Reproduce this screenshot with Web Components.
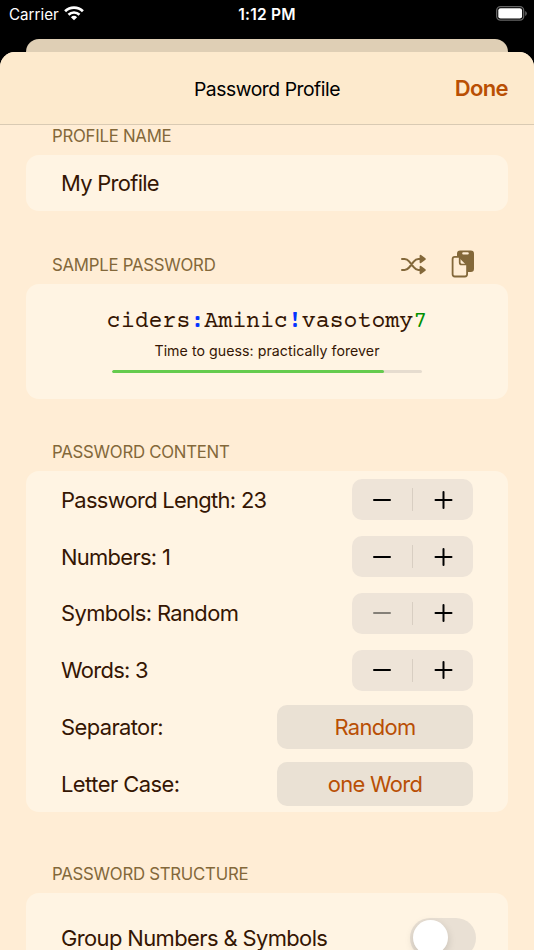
<!DOCTYPE html>
<html lang="en">
<head>
<meta charset="utf-8">
<title>Password Profile</title>
<style>
    body {
        margin: 0;
        height: 950px;
        overflow: hidden;
        background: #000;
        font-family: Inter, "Liberation Sans", sans-serif;
        --text: #351603;
        --accent: #b94f04;
        --muted: #83683a;
        --page: #ffedd5;
        --card: #fff4e3;
    }
</style>
</head>
<body>
<profile-sheet>
    <form-section label="Profile Name" style="height: 86.4px">
        <form-row style="height: 56.4px">My Profile</form-row>
    </form-section>
    <form-section label="Sample Password" style="height: 188px">
        <sample-actions slot="actions"></sample-actions>
        <password-sample strength="87.7">ciders:Aminic!vasotomy7</password-sample>
    </form-section>
    <form-section label="Password Content" style="height: 412.6px">
        <form-row>Password Length: 23<value-stepper slot="control"></value-stepper></form-row>
        <form-row>Numbers: 1<value-stepper slot="control"></value-stepper></form-row>
        <form-row style="letter-spacing: -0.62px">Symbols: Random<value-stepper slot="control" at-min></value-stepper></form-row>
        <form-row>Words: 3<value-stepper slot="control"></value-stepper></form-row>
        <form-row style="letter-spacing: -0.6px">Separator:<option-button slot="control">Random</option-button></form-row>
        <form-row style="letter-spacing: -0.53px">Letter Case:<option-button slot="control">one Word</option-button></form-row>
    </form-section>
    <form-section label="Password Structure" style="height: 170.4px">
        <form-row style="height: 89px; letter-spacing: -0.6px">Group Numbers &amp; Symbols<toggle-switch slot="control"></toggle-switch></form-row>
    </form-section>
</profile-sheet>

<script>
class StatusBar extends HTMLElement {
    constructor() {
        super();
        this.attachShadow({mode: "open"}).innerHTML = `
        <style>
        :host {
            display: grid;
            grid-template-columns: 1fr auto 1fr;
            align-items: center;
            height: 28px;
            padding: 0 9px;
            color: #fff;
            font-size: 15.2px;
        }
        .network {
            display: flex;
            align-items: center;
            gap: 5px;
        }
        .time {
            font-size: 15.5px;
            font-weight: 600;
            letter-spacing: 0.2px;
        }
        .battery {
            justify-self: end;
            margin-right: -2px;
        }
        svg {
            display: block;
            margin-top: -2px;
        }
        </style>
        <div class="network">
            <span>Carrier</span>
            <svg width="20" height="15" viewBox="0 0 20 15" fill="none" stroke="#fff" stroke-width="2.7">
                <path d="M1.1 5.2a12.8 12.8 0 0 1 17.8 0M4.5 8.7a8 8 0 0 1 11 0"/>
                <path d="M10 14.3 6.9 11.2a4.5 4.5 0 0 1 6.2 0z" fill="#fff" stroke="none"/>
            </svg>
        </div>
        <span class="time">1:12 PM</span>
        <svg class="battery" width="31" height="15" viewBox="0 0 31 15">
            <rect x=".7" y=".7" width="27" height="13.4" rx="3.8" fill="none" stroke="#666" stroke-width="1.3"/>
            <rect x="2.3" y="2.3" width="23.8" height="10.2" rx="2.2" fill="#fff"/>
            <path d="M29.3 5v5q1.4-.8 1.4-2.5T29.3 5z" fill="#777"/>
        </svg>`;
    }
}

class ProfileSheet extends HTMLElement {
    constructor() {
        super();
        this.attachShadow({mode: "open"}).innerHTML = `
        <style>
        :host {
            display: flex;
            flex-direction: column;
            height: 950px;
        }
        .behind {
            flex: none;
            height: 13px;
            margin: 11px 26px 0;
            border-radius: 13px 13px 0 0;
            background: #dfcfb5;
        }
        .sheet {
            flex: 1;
            min-height: 0;
            overflow: hidden;
            border-radius: 15px 15px 0 0;
            background: var(--page);
        }
        header {
            display: grid;
            grid-template-columns: 1fr auto 1fr;
            align-items: center;
            box-sizing: border-box;
            height: 73px;
            padding: 0 26px;
            border-bottom: 1px solid #d9cab3;
            background: #fdeacd;
        }
        h1 {
            grid-column: 2;
            margin: 0;
            padding-top: 2px;
            color: #000;
            font-size: 19.35px;
            font-weight: 400;
            letter-spacing: -0.48px;
        }
        .done {
            justify-self: end;
            color: var(--accent);
            font-size: 22px;
            font-weight: 600;
            letter-spacing: -0.6px;
        }
        </style>
        <status-bar></status-bar>
        <div class="behind"></div>
        <div class="sheet">
            <header><h1>Password Profile</h1><span class="done">Done</span></header>
            <slot></slot>
        </div>`;
    }
}

class FormSection extends HTMLElement {
    constructor() {
        super();
        this.attachShadow({mode: "open"}).innerHTML = `
        <style>
        :host {
            display: flex;
            flex-direction: column;
            padding: 0 26px;
        }
        .heading {
            flex: 1;
            display: flex;
            justify-content: space-between;
            align-items: flex-end;
            padding: 0 32px 0 26px;
        }
        h2 {
            margin: 0 0 9px;
            color: var(--muted);
            font-size: 16.77px;
            font-weight: 400;
            line-height: 20px;
            letter-spacing: -0.25px;
            text-transform: uppercase;
        }
        .card {
            flex: none;
            border-radius: 13px;
            background: var(--card);
        }
        </style>
        <div class="heading"><h2>${this.getAttribute("label")}</h2><slot name="actions"></slot></div>
        <div class="card"><slot></slot></div>`;
    }
}

class FormRow extends HTMLElement {
    constructor() {
        super();
        this.attachShadow({mode: "open"}).innerHTML = `
        <style>
        :host {
            display: flex;
            justify-content: space-between;
            align-items: center;
            box-sizing: border-box;
            height: 56.75px;
            padding: 0 35px;
            color: var(--text);
            font-size: 21.93px;
            letter-spacing: -0.7px;
            white-space: nowrap;
        }
        </style>
        <span><slot></slot></span>
        <slot name="control"></slot>`;
    }
}

class SampleActions extends HTMLElement {
    constructor() {
        super();
        this.attachShadow({mode: "open"}).innerHTML = `
        <style>
        :host {
            display: flex;
            align-items: center;
            gap: 24px;
            margin: 0 1px 6px 0;
            color: var(--muted);
        }
        svg {
            display: block;
        }
        </style>
        <svg width="27" height="21" viewBox="0 0 27 21" fill="none" stroke="currentColor" stroke-width="2" stroke-linecap="round" stroke-linejoin="round">
            <path d="M2 5h2.6c2 0 3.2.8 4.500 2.400l4.600 5.800c1.500 1.900 2.800 2.800 4.700 2.800h2M2 16h2.600c2 0 3.200-.9 4.500-2.500l4.600-5.900c1.500-1.800 2.800-2.600 4.700-2.600h2"/>
            <path d="M20.500 1.700v6.600l4.400-3.300zM20.500 12.700v6.600l4.400-3.300z" fill="currentColor" stroke-width="1.8"/>
        </svg>
        <svg width="24" height="28" viewBox="0 0 24 28">
            <path d="M9.200.5h10.600q3.200 0 3.200 3.200v15.100q0 3.200-3.200 3.200H16V14L8 7H6V3.700q0-3.200 3.200-3.200z" fill="currentColor"/>
            <rect x="11.2" y="2.2" width="6.6" height="2.3" rx="1.1" fill="#ffedd5"/>
            <path d="M3.800 6.900h4.600l7.700 7.700v9.700q0 2.200-2.200 2.200H3.800q-2.200 0-2.200-2.200V9.100q0-2.200 2.200-2.200z" fill="#ffedd5" stroke="currentColor" stroke-width="1.8"/>
            <path d="M8.700 7.200v5.300q0 2 2 2h5.300" fill="none" stroke="currentColor" stroke-width="1.7"/>
        </svg>`;
    }
}

class PasswordSample extends HTMLElement {
    constructor() {
        super();
        // digits are green, anything that is not a letter or digit is blue
        const password = this.textContent
            .replace(/[^A-Za-z0-9]|[0-9]/g, c => `<span class="${/\d/.test(c) ? "digit" : "symbol"}">${c}</span>`);
        this.attachShadow({mode: "open"}).innerHTML = `
        <style>
        :host {
            display: flex;
            flex-direction: column;
            align-items: center;
            box-sizing: border-box;
            height: 115px;
            padding-top: 23.6px;
            color: var(--text);
        }
        .password {
            font: 23.22px/28px "Courier Prime", "Liberation Mono", monospace;
        }
        .symbol {
            color: #0433ff;
            font-weight: 700;
        }
        .digit {
            color: #008f00;
        }
        .guess {
            margin-top: 6px;
            font-size: 14.2px;
            line-height: 18px;
            letter-spacing: 0.04px;
        }
        .meter {
            width: 310px;
            height: 3px;
            margin-top: 10px;
            border-radius: 2px;
            overflow: hidden;
            background: #e6dccf;
        }
        .level {
            width: ${this.getAttribute("strength")}%;
            height: 100%;
            border-radius: 2px;
            background: #65cb4e;
        }
        </style>
        <div class="password">${password}</div>
        <div class="guess">Time to guess: practically forever</div>
        <div class="meter"><div class="level"></div></div>`;
    }
}

class ValueStepper extends HTMLElement {
    constructor() {
        super();
        this.attachShadow({mode: "open"}).innerHTML = `
        <style>
        :host {
            display: flex;
            align-items: center;
            width: 121px;
            height: 41px;
            border-radius: 10px;
            background: #eee4d8;
        }
        svg {
            flex: 1;
            height: 20px;
            stroke: #000;
            stroke-width: 2;
            stroke-linecap: round;
        }
        :host([at-min]) .minus {
            stroke: #858078;
        }
        .divider {
            width: 1px;
            height: 23px;
            background: #d8cec2;
        }
        </style>
        <svg class="minus" viewBox="0 0 60 20"><path d="M22 10h16"/></svg>
        <div class="divider"></div>
        <svg viewBox="0 0 60 20"><path d="M22.5 10h16M30.5 2v16"/></svg>`;
    }
}

class OptionButton extends HTMLElement {
    constructor() {
        super();
        this.attachShadow({mode: "open"}).innerHTML = `
        <style>
        :host {
            display: flex;
            align-items: center;
            justify-content: center;
            width: 196px;
            height: 44px;
            border-radius: 10px;
            background: #eae1d4;
            color: var(--accent);
            letter-spacing: -0.68px;
        }
        </style>
        <slot></slot>`;
    }
}

class ToggleSwitch extends HTMLElement {
    constructor() {
        super();
        this.attachShadow({mode: "open"}).innerHTML = `
        <style>
        :host {
            display: flex;
            align-items: center;
            box-sizing: border-box;
            width: 66px;
            height: 40px;
            margin-right: -3px;
            padding: 0 2.5px;
            border-radius: 20px;
            background: #e9e0d4;
        }
        .knob {
            width: 35px;
            height: 35px;
            border-radius: 50%;
            background: #fff;
            box-shadow: 0 3px 8px rgba(0, 0, 0, 0.15);
        }
        </style>
        <div class="knob"></div>`;
    }
}

customElements.define("status-bar", StatusBar);
customElements.define("profile-sheet", ProfileSheet);
customElements.define("form-section", FormSection);
customElements.define("form-row", FormRow);
customElements.define("sample-actions", SampleActions);
customElements.define("password-sample", PasswordSample);
customElements.define("value-stepper", ValueStepper);
customElements.define("option-button", OptionButton);
customElements.define("toggle-switch", ToggleSwitch);
</script>
</body>
</html>
